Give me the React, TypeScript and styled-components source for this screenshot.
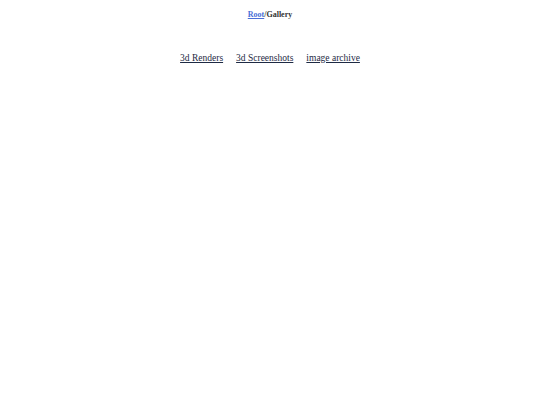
import React from "react";
import styled, { createGlobalStyle } from "styled-components";

const GlobalStyle = createGlobalStyle`
  html, body {
    margin: 0;
    padding: 0;
    background: #ffffff;
  }
  body {
    font-family: "Liberation Serif", "Times New Roman", serif;
    color: #222;
  }
`;

const Page = styled.div`
  display: flex;
  flex-direction: column;
  align-items: center;
  padding-top: 10px;
`;

const Breadcrumb = styled.nav`
  font-size: 8px;
  font-weight: bold;
  color: #333;
`;

const Crumb = styled.a`
  color: #4a6fd8;
  text-decoration: underline;
`;

const LinkRow = styled.div`
  display: flex;
  gap: 13px;
  margin-top: 34px;
`;

const GalleryLink = styled.a`
  font-size: 9.5px;
  color: #1e2a44;
  text-decoration: underline;
`;

const links = ["3d Renders", "3d Screenshots", "image archive"];

export default function App() {
  return (
    <>
      <GlobalStyle />
      <Page>
        <Breadcrumb>
          <Crumb href="#">Root</Crumb>/Gallery
        </Breadcrumb>
        <LinkRow>
          {links.map((l) => (
            <GalleryLink key={l} href="#">
              {l}
            </GalleryLink>
          ))}
        </LinkRow>
      </Page>
    </>
  );
}
